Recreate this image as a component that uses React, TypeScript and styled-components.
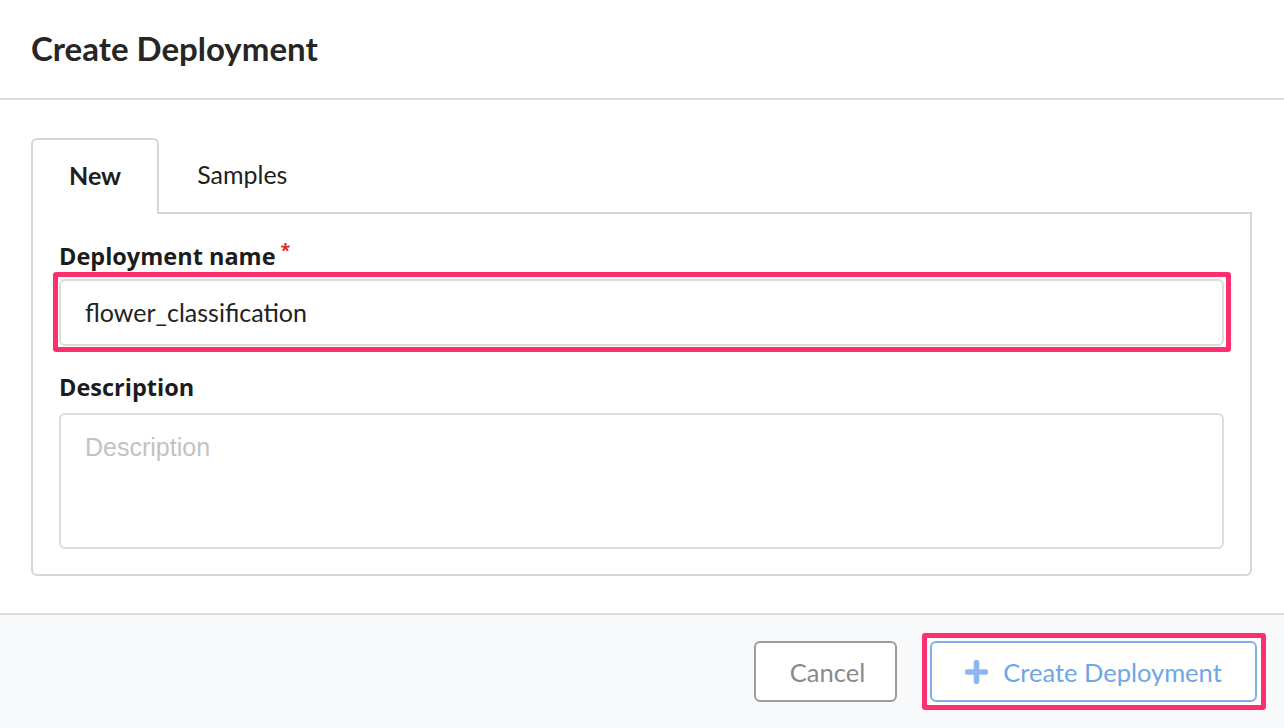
import React from "react";
import styled, { createGlobalStyle } from "styled-components";

const Global = createGlobalStyle`
  html, body { margin: 0; padding: 0; background: #fff; }
  body { font-family: Lato, "Noto Sans", sans-serif; color: #222; }
  * { box-sizing: border-box; }
`;

const Modal = styled.div`
  width: 1284px;
  height: 728px;
  display: flex;
  flex-direction: column;
  background: #fff;
`;

const Header = styled.div`
  height: 100px;
  flex: none;
  padding: 0 32px 0 31px;
  display: flex;
  align-items: center;
  border-bottom: 2px solid #dedede;
`;

const Title = styled.h1`
  margin: 0 0 2px 0;
  font-family: Lato, sans-serif;
  font-weight: 700;
  font-size: 33px;
  color: #262626;
`;

const Body = styled.div`
  flex: none;
  height: 513px;
  padding: 38px 32px 0 31px;
`;

const TabBar = styled.div`
  display: flex;
  align-items: flex-end;
  height: 74px;
`;

const Tab = styled.div<{ $active?: boolean }>`
  height: ${(p) => (p.$active ? "76px" : "74px")};
  margin-bottom: ${(p) => (p.$active ? "-2px" : "0")};
  padding: 0 ${(p) => (p.$active ? "36px" : "36px")} 4px;
  display: flex;
  align-items: center;
  font-size: 25px;
  font-weight: ${(p) => (p.$active ? 700 : 400)};
  color: #1e1e1e;
  background: #fff;
  border: 2px solid ${(p) => (p.$active ? "#d6d6d6" : "transparent")};
  border-bottom: none;
  border-radius: 6px 6px 0 0;
  position: relative;
  z-index: 1;
`;

const Panel = styled.div`
  width: 1221px;
  height: 364px;
  border: 2px solid #d6d6d6;
  border-radius: 0 0 6px 6px;
  padding: 27px 26px 0 26px;
  display: flex;
  flex-direction: column;
`;

const Label = styled.div`
  font-family: "Open Sans", "Noto Sans", sans-serif;
  font-size: 23.5px;
  line-height: 31px;
  font-weight: 700;
  color: #1c1c1c;
  display: flex;
  align-items: flex-start;
  height: 31px;
`;

const Star = styled.span`
  color: #e12a2a;
  font-size: 18px;
  line-height: 18px;
  margin-left: 5px;
`;

const Highlight = styled.div`
  margin: 0 -7px 0 -6px;
  border: 5px solid #ff2f6e;
  border-radius: 3px;
  padding: 2px 2px 1px 1px;
`;

const Input = styled.div`
  height: 67px;
  border: 2px solid #dcdcdc;
  border-radius: 6px;
  padding: 0 24px 2px;
  display: flex;
  align-items: center;
  font-size: 25px;
  color: #222;
`;

const DescLabel = styled(Label)`
  margin-top: 20px;
`;

const TextArea = styled.div`
  margin-top: 10px;
  height: 136px;
  border: 2px solid #dcdcdc;
  border-radius: 6px;
  padding: 18px 24px;
  font-family: "Liberation Sans", Arial, sans-serif;
  font-size: 25px;
  color: #c2c2c2;
`;

const Footer = styled.div`
  flex: 1;
  border-top: 2px solid #dcdcdc;
  background: #f8f9fb;
  display: flex;
  align-items: center;
  justify-content: flex-end;
  padding: 0 18px 0 0;
  gap: 25px;
`;

const CancelButton = styled.div`
  width: 143px;
  height: 61px;
  border: 2px solid #9c9c9c;
  border-radius: 6px;
  background: #fff;
  display: flex;
  align-items: center;
  justify-content: center;
  padding-left: 4px;
  font-size: 25.5px;
  color: #8a8a8a;
`;

const PinkBox = styled.div`
  border: 5px solid #ff2f6e;
  border-radius: 3px;
  padding: 3px 4px 3px 3px;
  background: #fff;
`;

const PrimaryButton = styled.div`
  width: 327px;
  height: 61px;
  border: 2px solid #7eb1ea;
  border-radius: 6px;
  background: #fff;
  display: flex;
  align-items: center;
  justify-content: center;
  gap: 15px;
  font-size: 25.5px;
  color: #6ea6e6;
`;

const Plus = () => (
  <svg width="23" height="24" viewBox="0 0 23 24">
    <path d="M11.5 2.5v19M2.5 12h18" stroke="#8ab8ee" strokeWidth="5.5" strokeLinecap="round" />
  </svg>
);

export default function App() {
  return (
    <>
      <Global />
      <Modal>
        <Header>
          <Title>Create Deployment</Title>
        </Header>
        <Body>
          <TabBar>
            <Tab $active>New</Tab>
            <Tab>Samples</Tab>
          </TabBar>
          <Panel>
            <Label>
              Deployment name<Star>*</Star>
            </Label>
            <Highlight>
              <Input>flower_classification</Input>
            </Highlight>
            <DescLabel>Description</DescLabel>
            <TextArea>Description</TextArea>
          </Panel>
        </Body>
        <Footer>
          <CancelButton>Cancel</CancelButton>
          <PinkBox>
            <PrimaryButton>
              <Plus />
              Create Deployment
            </PrimaryButton>
          </PinkBox>
        </Footer>
      </Modal>
    </>
  );
}
